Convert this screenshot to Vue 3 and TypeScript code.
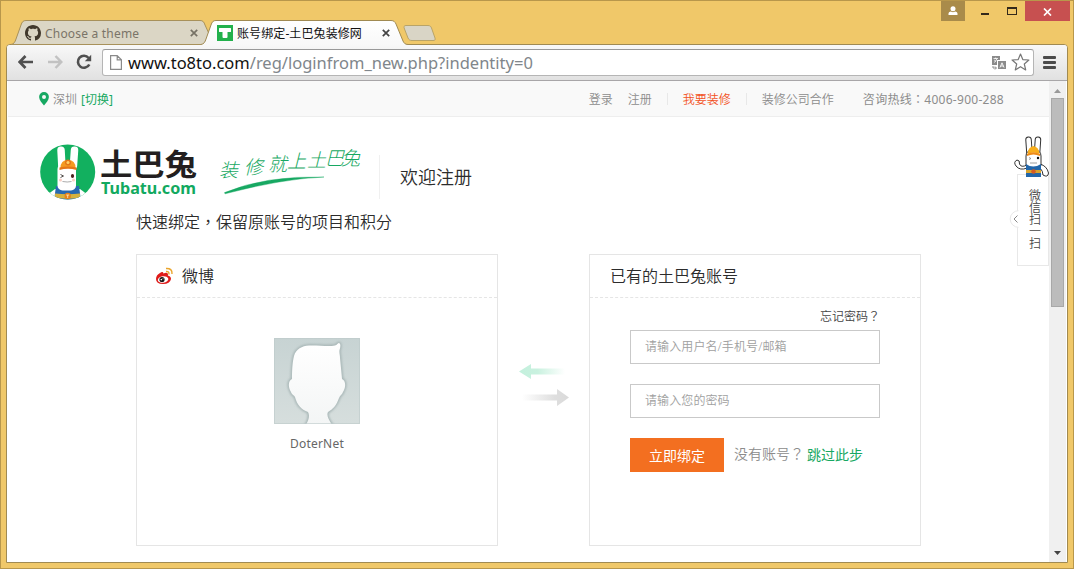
<script setup lang="ts">
import { ref } from 'vue'

interface NavLink {
  label: string
  kind: string
}

const links: NavLink[] = [
  { label: '登录', kind: 'login' },
  { label: '注册', kind: 'register' },
  { label: '我要装修', kind: 'hot' },
  { label: '装修公司合作', kind: 'partner' },
]

const account = ref('')
const password = ref('')
</script>

<template>
  <div class="window">
    <header class="titlebar">
      <div class="tab tab-idle">
        <svg class="tab-shape" width="204" height="25" viewBox="0 0 204 25">
          <path d="M0 24.5C3 24 4 22 5 19L10 5C11 2 12 .5 15 .5H189C192 .5 193 2 194 5L203 24.5Z" fill="#dbd6c5" stroke="#a8915a" />
        </svg>
        <svg class="favicon" width="16" height="16" viewBox="0 0 16 16">
          <path fill="#40382c" d="M8 0C3.58 0 0 3.58 0 8c0 3.54 2.29 6.53 5.47 7.59.4.07.55-.17.55-.38 0-.19-.01-.82-.01-1.49-2.01.37-2.53-.49-2.69-.94-.09-.23-.48-.94-.82-1.13-.28-.15-.68-.52-.01-.53.63-.01 1.08.58 1.23.82.72 1.21 1.87.87 2.33.66.07-.52.28-.87.51-1.07-1.78-.2-3.64-.89-3.64-3.95 0-.87.31-1.59.82-2.15-.08-.2-.36-1.02.08-2.12 0 0 .67-.21 2.2.82.64-.18 1.32-.27 2-.27s1.36.09 2 .27c1.53-1.04 2.2-.82 2.2-.82.44 1.1.16 1.92.08 2.12.51.56.82 1.27.82 2.15 0 3.07-1.87 3.75-3.65 3.95.29.25.54.73.54 1.48 0 1.07-.01 1.93-.01 2.2 0 .21.15.46.55.38A8.01 8.01 0 0 0 16 8c0-4.42-3.58-8-8-8Z" />
        </svg>
        <span class="tab-title idle-title">Choose a theme</span>
        <svg class="tab-close" width="8" height="8" viewBox="0 0 8 8"><path d="M.8.8l6.4 6.4M7.2.8L.8 7.2" stroke="#777265" stroke-width="1.7" /></svg>
      </div>
      <div class="tab tab-active">
        <svg class="tab-shape" width="208" height="26" viewBox="0 0 208 26">
          <defs>
            <linearGradient id="tabFill" x1="0" y1="0" x2="0" y2="1">
              <stop offset="0" stop-color="#fff" />
              <stop offset="1" stop-color="#f8f8f8" />
            </linearGradient>
          </defs>
          <path d="M0 26V24.5C3 24 4 22 5 19L10 5C11 2 12 .5 15 .5H190C193 .5 194 2 195 4L202 21C203 23 204 24.5 207 24.5V26Z" fill="url(#tabFill)" />
          <path d="M0 24.5C3 24 4 22 5 19L10 5C11 2 12 .5 15 .5H190C193 .5 194 2 195 4L202 21C203 23 204 24.5 207 24.5" fill="none" stroke="#a08a52" />
        </svg>
        <svg class="favicon" width="16" height="16" viewBox="0 0 16 16">
          <rect width="16" height="16" fill="#22b14c" />
          <path d="M2 3.500Q2 3 2.500 3H13.500Q14 3 14 3.500V6.500Q14 7 13 7H10.500V12Q10.500 13 9.500 13H6.500Q5.500 13 5.500 12V7H3Q2 7 2 6.500Z" fill="#fff" />
        </svg>
        <span class="tab-title">账号绑定-土巴兔装修网</span>
        <svg class="tab-close" width="8" height="8" viewBox="0 0 8 8"><path d="M.8.8l6.4 6.4M7.2.8L.8 7.2" stroke="#444" stroke-width="1.7" /></svg>
      </div>
      <svg class="new-tab" width="33" height="17" viewBox="0 0 33 17">
        <path d="M3 .5H25C27 .5 28 1.500 28.500 3L32 13C32.500 15 32 15.500 30 15.500H9C7 15.500 6 15 5 13L1.500 4C.5 1.500 1 .5 3 .5Z" fill="#d9d5c6" stroke="#b9a468" />
      </svg>
      <div class="controls">
        <span class="user-btn">
          <svg width="10" height="10" viewBox="0 0 10 10"><circle cx="5" cy="2.700" r="2.500" fill="#fff" /><path d="M.5 9V7.500Q.5 6 2.500 5.500L5 6.200 7.500 5.500Q9.500 6 9.500 7.500V9Z" fill="#fff" /></svg>
        </span>
        <span class="min-btn"></span>
        <span class="max-btn"></span>
        <span class="close-btn">
          <svg width="9" height="8" viewBox="0 0 9 8"><path d="M1 .5l7 7M8 .5l-7 7" stroke="#fff" stroke-width="1.700" /></svg>
        </span>
      </div>
    </header>

    <div class="frame">
      <div class="toolbar">
        <svg class="nav back" width="16" height="14" viewBox="0 0 16 14"><path d="M7.500 1L1.700 7l5.800 6M2 7H15" fill="none" stroke="#505050" stroke-width="2.700" /></svg>
        <svg class="nav forward" width="16" height="14" viewBox="0 0 16 14"><path d="M8.500 1l5.800 6-5.800 6M14 7H1" fill="none" stroke="#c2c2c2" stroke-width="2.500" /></svg>
        <svg class="nav reload" width="16" height="16" viewBox="0 0 16 16">
          <path d="M12.600 4A6 6 0 1 0 13.300 10.500" fill="none" stroke="#505050" stroke-width="2.600" />
          <path d="M15.200 .8V7.200H8.800Z" fill="#505050" />
        </svg>
        <div class="omnibox">
          <svg class="page-icon" width="12" height="15" viewBox="0 0 12 15"><path d="M.6.6H7.200L11.400 4.800V14.400H.6ZM7.200.6V4.800H11.400" fill="#fff" stroke="#8a8a8a" stroke-width="1.200" /></svg>
          <span class="url"><b>www.to8to.com</b>/reg/loginfrom_new.php?indentity=0</span>
          <svg class="translate" width="14" height="14" viewBox="0 0 14 14">
            <path d="M0 0H8V4H5V9H0Z" fill="#8b8b8b" /><path d="M1.500 2.500H6M3.700 1.500V3M2 6.500Q4.500 5 4.800 2.700M2.200 4L4 5.500" stroke="#fff" stroke-width=".8" fill="none" />
            <rect x="6" y="5" width="8" height="8" fill="#8b8b8b" /><path d="M8 11.500L10 6.800 12 11.500M8.800 10H11.300" stroke="#fff" stroke-width=".9" fill="none" />
            <path d="M1 10V12H4M3 10.500L4.500 12 3 13.500" fill="none" stroke="#8b8b8b" />
          </svg>
          <svg class="star" width="19" height="18" viewBox="0 0 19 18"><path d="M9.500 1L11.800 6.600 17.900 7 13.300 11 14.700 16.900 9.500 13.700 4.300 16.900 5.700 11 1.100 7 7.200 6.600Z" fill="#fff" stroke="#777" stroke-width="1.200" stroke-linejoin="round" /></svg>
        </div>
        <div class="menu"><i></i><i></i><i></i></div>
      </div>

      <div class="viewport">
        <main class="page">
          <div class="topbar">
            <svg class="pin" width="10" height="14" viewBox="0 0 10 14"><path fill-rule="evenodd" d="M5 0A4.900 4.900 0 0 0 .1 5C.1 8 3 11 5 13.600 7 11 9.900 8 9.900 5A4.900 4.900 0 0 0 5 0ZM5 2.900A2 2 0 1 1 5 6.900 2 2 0 0 1 5 2.900Z" fill="#17a862" /></svg>
            <span class="city">深圳</span>
            <a class="switch">[切换]</a>
            <nav class="links">
              <a v-for="l in links" :key="l.kind" :class="l.kind">{{ l.label }}</a>
              <span class="phone">咨询热线<span class="mark">：</span>4006-900-288</span>
            </nav>
          </div>

          <div class="brand">
            <svg class="logo" width="56" height="56" viewBox="0 0 56 56">
              <defs><clipPath id="disc"><circle cx="27.700" cy="28" r="27.500" /></clipPath></defs>
              <circle cx="27.700" cy="28" r="27.500" fill="#12b05f" />
              <g clip-path="url(#disc)">
                <path d="M15 45L7 51 12 57H44L48 51 40 45Z" fill="#fff" />
                <path d="M16 42H39L41 57H14Z" fill="#2769b1" />
                <rect x="17.500" y="20" width="18.500" height="26.500" rx="5" fill="#fff" />
                <rect x="18" y="2.500" width="7.500" height="23" rx="3.700" fill="#fff" transform="rotate(-3 21 20)" />
                <rect x="29.800" y="2.500" width="7.500" height="23" rx="3.700" fill="#fff" transform="rotate(4 34 20)" />
                <path d="M15 49.500Q28 51 40 49.500V53.500Q28 56 15 53.500Z" fill="#d5b23e" />
              </g>
              <path d="M20.500 24Q20.500 16 28 16T35.500 24Z" fill="#f49a22" />
              <path d="M19.500 23.500Q28 21.500 36.500 23.500V26Q28 23.500 19.500 26Z" fill="#e57618" />
              <circle cx="28" cy="18.500" r="3" fill="#e57618" /><circle cx="28" cy="18.500" r="1.500" fill="#ffd167" />
              <path d="M20.500 30.500L23.500 32 20.500 33.500" fill="none" stroke="#27211d" stroke-width=".8" />
              <ellipse cx="32.500" cy="32" rx="1.600" ry="2.100" fill="#4a211b" />
              <circle cx="20.500" cy="36" r="1.500" fill="#f9cfc2" /><circle cx="33.500" cy="36" r="1.500" fill="#f9cfc2" />
              <path d="M22.500 37.500Q27.500 38.500 31.500 37.500" fill="none" stroke="#888" stroke-width=".7" />
              <circle cx="27.700" cy="52" r="3.200" fill="#e58119" /><path d="M26.200 51H29.200M27.700 51V54" stroke="#fff2c7" stroke-width=".8" />
            </svg>
            <svg class="wordmark" width="98" height="54" viewBox="0 0 98 54">
              <text class="name" x="-1" y="31" textLength="97" lengthAdjust="spacingAndGlyphs">土巴兔</text>
              <text class="domain" x="0" y="50" textLength="95" lengthAdjust="spacingAndGlyphs">Tubatu.com</text>
            </svg>
            <svg class="slogan" width="148" height="54" viewBox="0 0 148 54">
              <text class="script" x="4 29 53 72 92 110 126" y="33 30 27 24 23 21 21">装修就上土巴兔</text>
              <path d="M9.500 48.600Q50 31.500 109 33Q67 34.800 10 49.800Z" fill="#17a862" stroke="#17a862" stroke-width=".4" />
            </svg>
            <span class="rule"></span>
            <h1>欢迎注册</h1>
          </div>

          <h2>快速绑定<span class="mark">，</span>保留原账号的项目和积分</h2>

          <div class="panels">
            <section class="panel social">
              <div class="panel-head">
                <svg class="weibo" width="18" height="18" viewBox="0 0 18 18">
                  <path d="M1 12Q1 8 5 6Q8 4 8.500 6.500Q12 5 13 7Q13 8 12.800 8.500Q16 9 16 12Q15 17 8 17Q1 17 1 12Z" fill="#df1b19" />
                  <ellipse cx="8" cy="12.500" rx="5.300" ry="3.300" fill="#fff" transform="rotate(-8 8 12)" />
                  <circle cx="7" cy="12.500" r="2.600" fill="#161616" /><circle cx="6.300" cy="12.600" r=".8" fill="#fff" /><circle cx="8" cy="11.700" r=".5" fill="#fff" />
                  <path d="M11 4.500Q14.300 4 14 7.500M11 1.500Q17.500 1 17 7" fill="none" stroke="#eaa52c" stroke-width="1.400" />
                </svg>
                <span>微博</span>
              </div>
              <svg class="avatar" width="86" height="86" viewBox="0 0 86 86">
                <defs>
                  <linearGradient id="back" x1="0" y1="0" x2="0" y2="1"><stop offset="0" stop-color="#c7d3d3" /><stop offset="1" stop-color="#d6dedd" /></linearGradient>
                  <linearGradient id="face" x1="0" y1="0" x2="0" y2="1"><stop offset="0" stop-color="#fff" /><stop offset="1" stop-color="#f3f5f5" /></linearGradient>
                  <filter id="glow" x="-10%" y="-10%" width="120%" height="120%"><feGaussianBlur stdDeviation="1.200" /></filter>
                  <path id="head" d="M31 88C35 83 36 77 34 74C28 72 23 67 21 59C20 57 18 57 17 54C14 49 14 43 18 41C18 33 18.500 24 20 18C22 11 28 8 35 7.500C44 7 54 9 61 7.500C63 7 64 5 65 5C67 6 66.500 9 65.500 12C65 15 66 17 66 20L68 41C72 43 72 49 69 54C68 57 66 57 65 60C62 68 59 71 54 74C52 77 55 83 59 88Z" />
                </defs>
                <rect width="86" height="86" fill="url(#back)" />
                <use href="#head" fill="none" stroke="#a9b7b7" stroke-width="3" filter="url(#glow)" />
                <use href="#head" fill="url(#face)" />
                <rect x=".5" y=".5" width="85" height="85" fill="none" stroke="#bdcaca" stroke-opacity=".6" />
              </svg>
              <p class="nick">DoterNet</p>
            </section>

            <svg class="arrows" width="50" height="42" viewBox="0 0 50 42">
              <defs>
                <linearGradient id="toLeft"><stop offset="0" stop-color="#c3f0dd" /><stop offset=".4" stop-color="#c9f1df" /><stop offset="1" stop-color="#fff" /></linearGradient>
                <linearGradient id="toRight"><stop offset="0" stop-color="#fff" /><stop offset=".7" stop-color="#dedede" /><stop offset="1" stop-color="#dadada" /></linearGradient>
              </defs>
              <path d="M0 7.500L12 0V4.500H46V10.500H12V15Z" fill="url(#toLeft)" />
              <path d="M50 33.500L38 25V30.500H3V36.500H38V42Z" fill="url(#toRight)" />
            </svg>

            <section class="panel existing">
              <div class="panel-head"><span>已有的土巴兔账号</span></div>
              <form class="form" @submit.prevent>
                <a class="forgot">忘记密码<span class="mark">？</span></a>
                <input v-model="account" type="text" placeholder="请输入用户名/手机号/邮箱" />
                <input v-model="password" type="password" placeholder="请输入您的密码" />
                <div class="actions">
                  <button type="submit">立即绑定</button>
                  <span class="hint">没有账号<span class="mark">？</span></span>
                  <a class="skip">跳过此步</a>
                </div>
              </form>
            </section>
          </div>

          <aside class="scan">
            <svg class="mascot" width="36" height="42" viewBox="0 0 36 42">
              <g fill="#fff" stroke="#333" stroke-width="1">
                <rect x="12.500" y="1" width="5.500" height="20" rx="2.700" transform="rotate(-4 15 14)" />
                <rect x="20.500" y="1" width="5.500" height="20" rx="2.700" transform="rotate(4 23 14)" />
                <path d="M13 29Q7 32 5.500 28Q6 24 3 24Q-1 26 2 30Q6 35 13 32ZM26 28Q33 30 34.500 37Q34 42 29 39Q29 35 26 32Z" />
                <path d="M12 20Q12 14 19.500 14T27 20V29Q26 33 19.500 33T12 29Z" />
              </g>
              <path d="M12 28Q19 33 27 28V41H12Z" fill="#2266aa" />
              <path d="M12 34H27V37H12Z" fill="#d9a42d" /><circle cx="19.500" cy="35.500" r="2.300" fill="#d65b23" />
              <path d="M13.500 18Q14 11 19.500 10Q25 11 25.500 18Q19.500 15 13.500 18Z" fill="#f8ae1b" />
              <path d="M13 18Q19.500 14.500 26 18V20Q19.500 17 13 20Z" fill="#ee8a18" />
              <path d="M15 21.500L17 22.500 15 23.500M16 27H23" fill="none" stroke="#777" stroke-width=".7" /><circle cx="24" cy="22" r="1.200" fill="#111" />
            </svg>
            <svg class="handle" width="11" height="18" viewBox="0 0 11 18"><path d="M10.500 .7A8.300 8.300 0 0 0 10.500 17.300" fill="#fff" stroke="#e8e8e8" /><path d="M9.500 5.500L6 9L9.500 12.500" fill="none" stroke="#888" /></svg>
            <span class="scan-text">微信扫一扫</span>
          </aside>
        </main>

        <div class="scrollbar">
          <svg width="7" height="4" viewBox="0 0 7 4"><path d="M0 4L3.500 0 7 4Z" fill="#999" /></svg>
          <div class="thumb"></div>
          <svg class="down" width="7" height="4" viewBox="0 0 7 4"><path d="M0 0L3.500 4 7 0Z" fill="#444" /></svg>
        </div>
      </div>
    </div>
  </div>
</template>

<style>
html,
body {
  margin: 0;
  overflow: hidden;
}
</style>

<style scoped>
* {
  box-sizing: border-box;
}
svg {
  display: block;
  flex: none;
}
.window {
  display: flex;
  flex-direction: column;
  width: 1074px;
  height: 569px;
  padding: 0 6px 6px;
  background: #f0c869;
  box-shadow: inset 0 0 0 1px #b8974b;
  font-family: 'Noto Sans', 'Noto Sans CJK SC', sans-serif;
  font-weight: 350;
  font-size: 12px;
  color: #2c2c2c;
}
.titlebar {
  position: relative;
  z-index: 2;
  display: flex;
  height: 44px;
  flex: none;
  padding: 20px 0 0 5px;
}
.tab {
  position: relative;
  display: flex;
  align-items: center;
  height: 25px;
}
.tab-idle {
  width: 190px;
  padding: 1px 3px 0 14px;
}
.tab-active {
  width: 202px;
  z-index: 1;
  padding: 1px 13px 0 16px;
}
.tab-shape {
  position: absolute;
  left: 0;
  top: 0;
}
.favicon,
.tab-title,
.tab-close {
  position: relative;
}
.tab-title {
  margin-left: 4px;
  flex: 1;
  white-space: nowrap;
  font-weight: 400;
  letter-spacing: 0.1px;
  color: #111;
}
.idle-title {
  font-size: 12px;
  letter-spacing: 0.2px;
  color: #7a7468;
}
.new-tab {
  margin: 5px 0 0;
}
.controls {
  display: flex;
  margin-left: auto;
  margin-top: -19px;
  margin-right: -2px;
  align-items: flex-start;
}
.user-btn,
.close-btn {
  display: flex;
  align-items: center;
  justify-content: center;
  height: 20px;
}
.user-btn {
  width: 24px;
  background: #a98b4a;
}
.min-btn {
  width: 8px;
  height: 2px;
  margin: 12px 18px 0 16px;
  background: #33291b;
}
.max-btn {
  width: 10px;
  height: 8px;
  margin: 6px 8px 0 0;
  border: 1px solid #33291b;
  border-top-width: 2px;
}
.close-btn {
  width: 45px;
  background: #c75050;
  padding-top: 2px;
}
.frame {
  display: flex;
  flex-direction: column;
  flex: 1;
  min-height: 0;
  border: 1px solid #a08a52;
  border-radius: 4px 4px 0 0;
  background: #fff;
}
.toolbar {
  display: flex;
  align-items: center;
  height: 36px;
  flex: none;
  padding: 0 10px 1px 11px;
  border-bottom: 1px solid #a8a6a8;
  border-radius: 3px 3px 0 0;
  background: linear-gradient(#f8f8f8, #e1e1e1);
}
.forward {
  margin-left: 13px;
}
.reload {
  margin-left: 13px;
}
.omnibox {
  display: flex;
  align-items: center;
  width: 932px;
  height: 27px;
  margin-left: 10px;
  padding: 0 3px 0 7px;
  border: 1px solid #b5b5b5;
  border-top-color: #999;
  border-radius: 3px;
  background: #fff;
}
.url {
  flex: 1;
  margin-left: 6px;
  font-size: 16.5px;
  font-weight: 400;
  color: #80868b;
  white-space: nowrap;
}
.url b {
  font-weight: 400;
  color: #111;
}
.translate {
  margin-top: 1px;
}
.star {
  margin-left: 5px;
}
.menu {
  display: flex;
  flex-direction: column;
  gap: 2px;
  margin-left: 9px;
}
.menu i {
  width: 13px;
  height: 3px;
  border-radius: 1px;
  background: #4b4b4b;
}
.viewport {
  display: flex;
  flex: 1;
  min-height: 0;
  margin-left: 1px;
}
.page {
  position: relative;
  width: 1041px;
  overflow: hidden;
}
.mark {
  font-family: 'Noto Sans CJK TC', sans-serif;
  line-height: 1;
}
.topbar {
  display: flex;
  align-items: center;
  height: 36px;
  padding-left: 31px;
  border-bottom: 1px solid #eee;
  background: #f9f9f9;
  color: #8c8c8c;
}
.city {
  margin-left: 4px;
}
.switch {
  margin-left: 4px;
  font-weight: 400;
  color: #17a862;
}
.links {
  display: flex;
  margin-left: auto;
  padding-right: 45px;
  height: 12px;
  line-height: 14px;
  white-space: nowrap;
}
.register {
  margin-left: 15px;
}
.hot {
  margin-left: 15px;
  padding: 0 15px;
  border: solid #e8e8e8;
  border-width: 0 1px;
  color: #f2521f;
}
.partner {
  margin-left: 15px;
}
.phone {
  margin-left: 29px;
  font-weight: 400;
  letter-spacing: 0.28px;
  line-height: 13px;
}
.brand {
  display: flex;
  height: 84px;
  padding: 27px 0 0 32px;
}
.wordmark {
  margin-left: 5px;
  overflow: visible;
}
.name {
  font-size: 30px;
  font-weight: 700;
  fill: #231f20;
}
.domain {
  font-family: 'Noto Sans', sans-serif;
  font-size: 16px;
  font-weight: 700;
  fill: #12a95f;
}
.slogan {
  margin-left: 16px;
  overflow: visible;
}
.script {
  font-size: 19px;
  font-style: italic;
  font-weight: 300;
  fill: #17a862;
}
.rule {
  width: 1px;
  height: 44px;
  margin: 11px 0 0 16px;
  background: #f0f0f0;
}
h1,
h2,
p {
  margin: 0;
  font-weight: inherit;
}
h1 {
  margin: 21px 0 0 20px;
  font-size: 18px;
  line-height: 24px;
}
h2 {
  height: 24px;
  padding-left: 128px;
  margin-top: 9px;
  font-size: 16px;
  line-height: 24px;
}
.panels {
  display: flex;
  margin: 20px 0 0 128px;
}
.panel {
  height: 292px;
  border: 1px solid #e5e5e5;
}
.social {
  width: 362px;
}
.existing {
  width: 332px;
}
.panel-head {
  display: flex;
  align-items: center;
  height: 43px;
  padding: 0 0 2px 20px;
  border-bottom: 1px dashed #e5e5e5;
  font-size: 16px;
}
.weibo {
  margin: 1px 9px 0 -2px;
}
.avatar {
  margin: 40px auto 0;
}
.nick {
  margin-top: 11px;
  text-align: center;
  line-height: 18px;
  font-weight: 400;
  letter-spacing: 0.2px;
  color: #666;
}
.arrows {
  margin: 110px 20px 0 21px;
}
.form {
  display: flex;
  flex-direction: column;
  width: 250px;
  margin-left: 40px;
}
.forgot {
  align-self: flex-end;
  height: 32px;
  padding-top: 10px;
  line-height: 18px;
  color: #444;
}
input {
  width: 250px;
  height: 34px;
  margin: 0 0 20px;
  padding: 0 14px 1px;
  border: 1px solid #c9c9c9;
  border-radius: 0;
  outline: 0;
  font: inherit;
  letter-spacing: 0.1px;
}
input::placeholder {
  color: #a0a0a0;
}
.actions {
  display: flex;
  align-items: center;
  font-size: 14px;
  line-height: 20px;
  white-space: nowrap;
}
button {
  width: 94px;
  height: 34px;
  padding: 1px 0 0;
  border: 0;
  background: #f36f20;
  color: #fff;
  font: inherit;
  font-weight: 400;
}
.hint {
  height: 20px;
  margin: -2px 0 0 10px;
  color: #8c8c8c;
}
.skip {
  margin: 0 0 0 3px;
  font-weight: 400;
  color: #17a862;
}
.scan {
  position: absolute;
  left: 1009px;
  top: 93px;
  width: 32px;
  height: 92px;
  border: 1px solid #e8e8e8;
  background: #fff;
}
.mascot {
  position: absolute;
  left: -4px;
  top: -39px;
}
.handle {
  position: absolute;
  left: -10px;
  top: 35px;
}
.scan-text {
  display: block;
  width: 12px;
  margin: 15px 0 0 11px;
  line-height: 12px;
  word-break: break-all;
  color: #444;
}
.scrollbar {
  display: flex;
  flex-direction: column;
  align-items: center;
  width: 17px;
  padding: 8px 0 7px;
  background: #f0f0f0;
}
.thumb {
  width: 13px;
  height: 209px;
  margin-top: 5px;
  border: 1px solid #a8a8a8;
  background: #bcbcbc;
}
.down {
  margin-top: auto;
}
</style>
